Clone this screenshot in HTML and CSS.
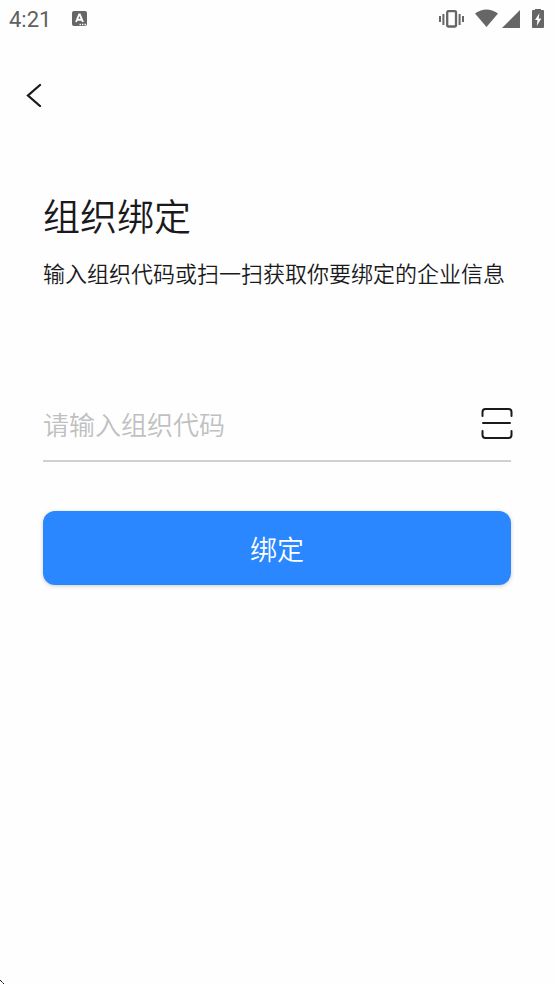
FILE: index.html
```html
<!DOCTYPE html>
<html lang="zh-CN">
<head>
<meta charset="utf-8">
<meta name="viewport" content="width=device-width, initial-scale=1">
<title>组织绑定</title>
<link rel="stylesheet" href="styles.css">
</head>
<body>
<header class="status">
  <div class="status-left">
    <span class="time">4:21</span>
    <svg class="app-icon" width="16" height="16" viewBox="0 0 16 16" aria-hidden="true">
      <rect width="15" height="15" x="0" rx="2" fill="#666"/>
      <path d="M4 11 7.200 3.500h.6L11 11M5 8.800h5" fill="none" stroke="#fefefe" stroke-width="1.900"/>
      <path d="M7.500 13.500h1.400M10 13.500h1.400M12.500 13.500h1.400" stroke="#fefefe" stroke-width="1.300"/>
    </svg>
  </div>
  <svg class="status-icons" width="106" height="20" viewBox="0 0 106 20" fill="#666" aria-hidden="true">
    <path d="M0 7h2v6H0zM3.400 5h2v11h-2zM19.600 5h2v11h-2zM23 7h2v6h-2z"/>
    <rect x="8.200" y="2.200" width="8.800" height="15.300" rx="1" fill="none" stroke="#666" stroke-width="2.300"/>
    <path d="M36 4.500Q47.500-3.500 59 4.500L47.500 18z"/>
    <path d="M81 1v18H63z"/>
    <path d="M96 0h6v1h2q1 0 1 1v16q0 1-1 1H94q-1 0-1-1V2q0-1 1-1h2z"/>
    <path d="M100.500 4 96 11h2.400l-.6 6 4.500-7.500h-2.600z" fill="#fefefe"/>
  </svg>
</header>
<nav class="nav">
  <button class="icon-button" type="button" aria-label="返回">
    <svg width="16" height="24" viewBox="0 0 16 24" fill="none" stroke="#1a1a1c" stroke-width="2.300" stroke-linecap="round" aria-hidden="true"><path d="M14 2 2 12.500 14 23"/></svg>
  </button>
</nav>
<main class="content">
  <h1 class="title">组织绑定</h1>
  <p class="subtitle">输入组织代码或扫一扫获取你要绑定的企业信息</p>
  <form class="form">
    <div class="field">
      <input class="code" type="text" placeholder="请输入组织代码" aria-label="组织代码">
      <button class="icon-button scan" type="button" aria-label="扫一扫">
        <svg width="32" height="34" viewBox="0 0 32 34" fill="none" stroke="#1a1a1c" stroke-width="2" stroke-linecap="round" aria-hidden="true"><path d="M1.500 10V6q0-3 3-3h23q3 0 3 3v4M2 17h27M1.500 25v4q0 3 3 3h23q3 0 3-3v-4"/></svg>
      </button>
    </div>
    <button class="submit" type="button">绑定</button>
  </form>
</main>
<svg class="corner" width="4" height="4" viewBox="0 0 4 4" aria-hidden="true"><path d="M0 0h1v1H0zM1 1h1v1H1zM3 3h1v1H3z" fill="#111"/><path d="M2 2h1v1H2z" fill="#777"/></svg>
</body>
</html>
```
FILE: styles.css
```css
* {
  box-sizing: border-box;
}

body {
  position: relative;
  min-height: 100vh;
  margin: 0;
  background: #fefefe;
  color: #1a1a1c;
  font-family: "Noto Sans CJK SC", sans-serif;
  font-weight: 350;
}

button,
input {
  padding: 0;
  border: 0;
  background: none;
  font-family: inherit;
  font-weight: inherit;
}

.status {
  display: flex;
  justify-content: space-between;
  align-items: center;
  height: 38px;
  padding: 0 9px;
}

.status-left {
  display: flex;
  align-items: center;
  gap: 21px;
}

.time {
  padding-top: 2px;
  color: #606060;
  font: 400 22px/28px Roboto, sans-serif;
}

svg {
  display: block;
}

.nav {
  display: flex;
  align-items: center;
  height: 114px;
  padding: 0 26px;
}

.icon-button {
  display: block;
  flex: none;
  cursor: pointer;
}

.content {
  padding: 35px 43px 0;
}

.title {
  margin: 0;
  font-size: 37px;
  font-weight: inherit;
  line-height: 56px;
}

.subtitle {
  margin: 11px 0 0;
  font-size: 22px;
  line-height: 36px;
  white-space: nowrap;
}

.form {
  margin-top: 96px;
}

.field {
  display: flex;
  align-items: center;
  height: 76px;
  border-bottom: 2px solid #d0d0d0;
}

.code {
  flex: 1;
  min-width: 0;
  height: 40px;
  color: #1a1a1c;
  font-size: 26px;
  outline: 0;
}

.code::placeholder {
  color: #c0c0c0;
  opacity: 1;
}

.scan {
  margin-right: -2px;
}

.submit {
  display: block;
  width: 100%;
  height: 74px;
  margin-top: 49px;
  border-radius: 12px;
  background: #2a87ff;
  box-shadow: 0 1px 4px rgba(0, 0, 0, 0.2);
  color: #fefefe;
  font-size: 27px;
  cursor: pointer;
}

.corner {
  position: absolute;
  bottom: 0;
  left: 0;
}
```
